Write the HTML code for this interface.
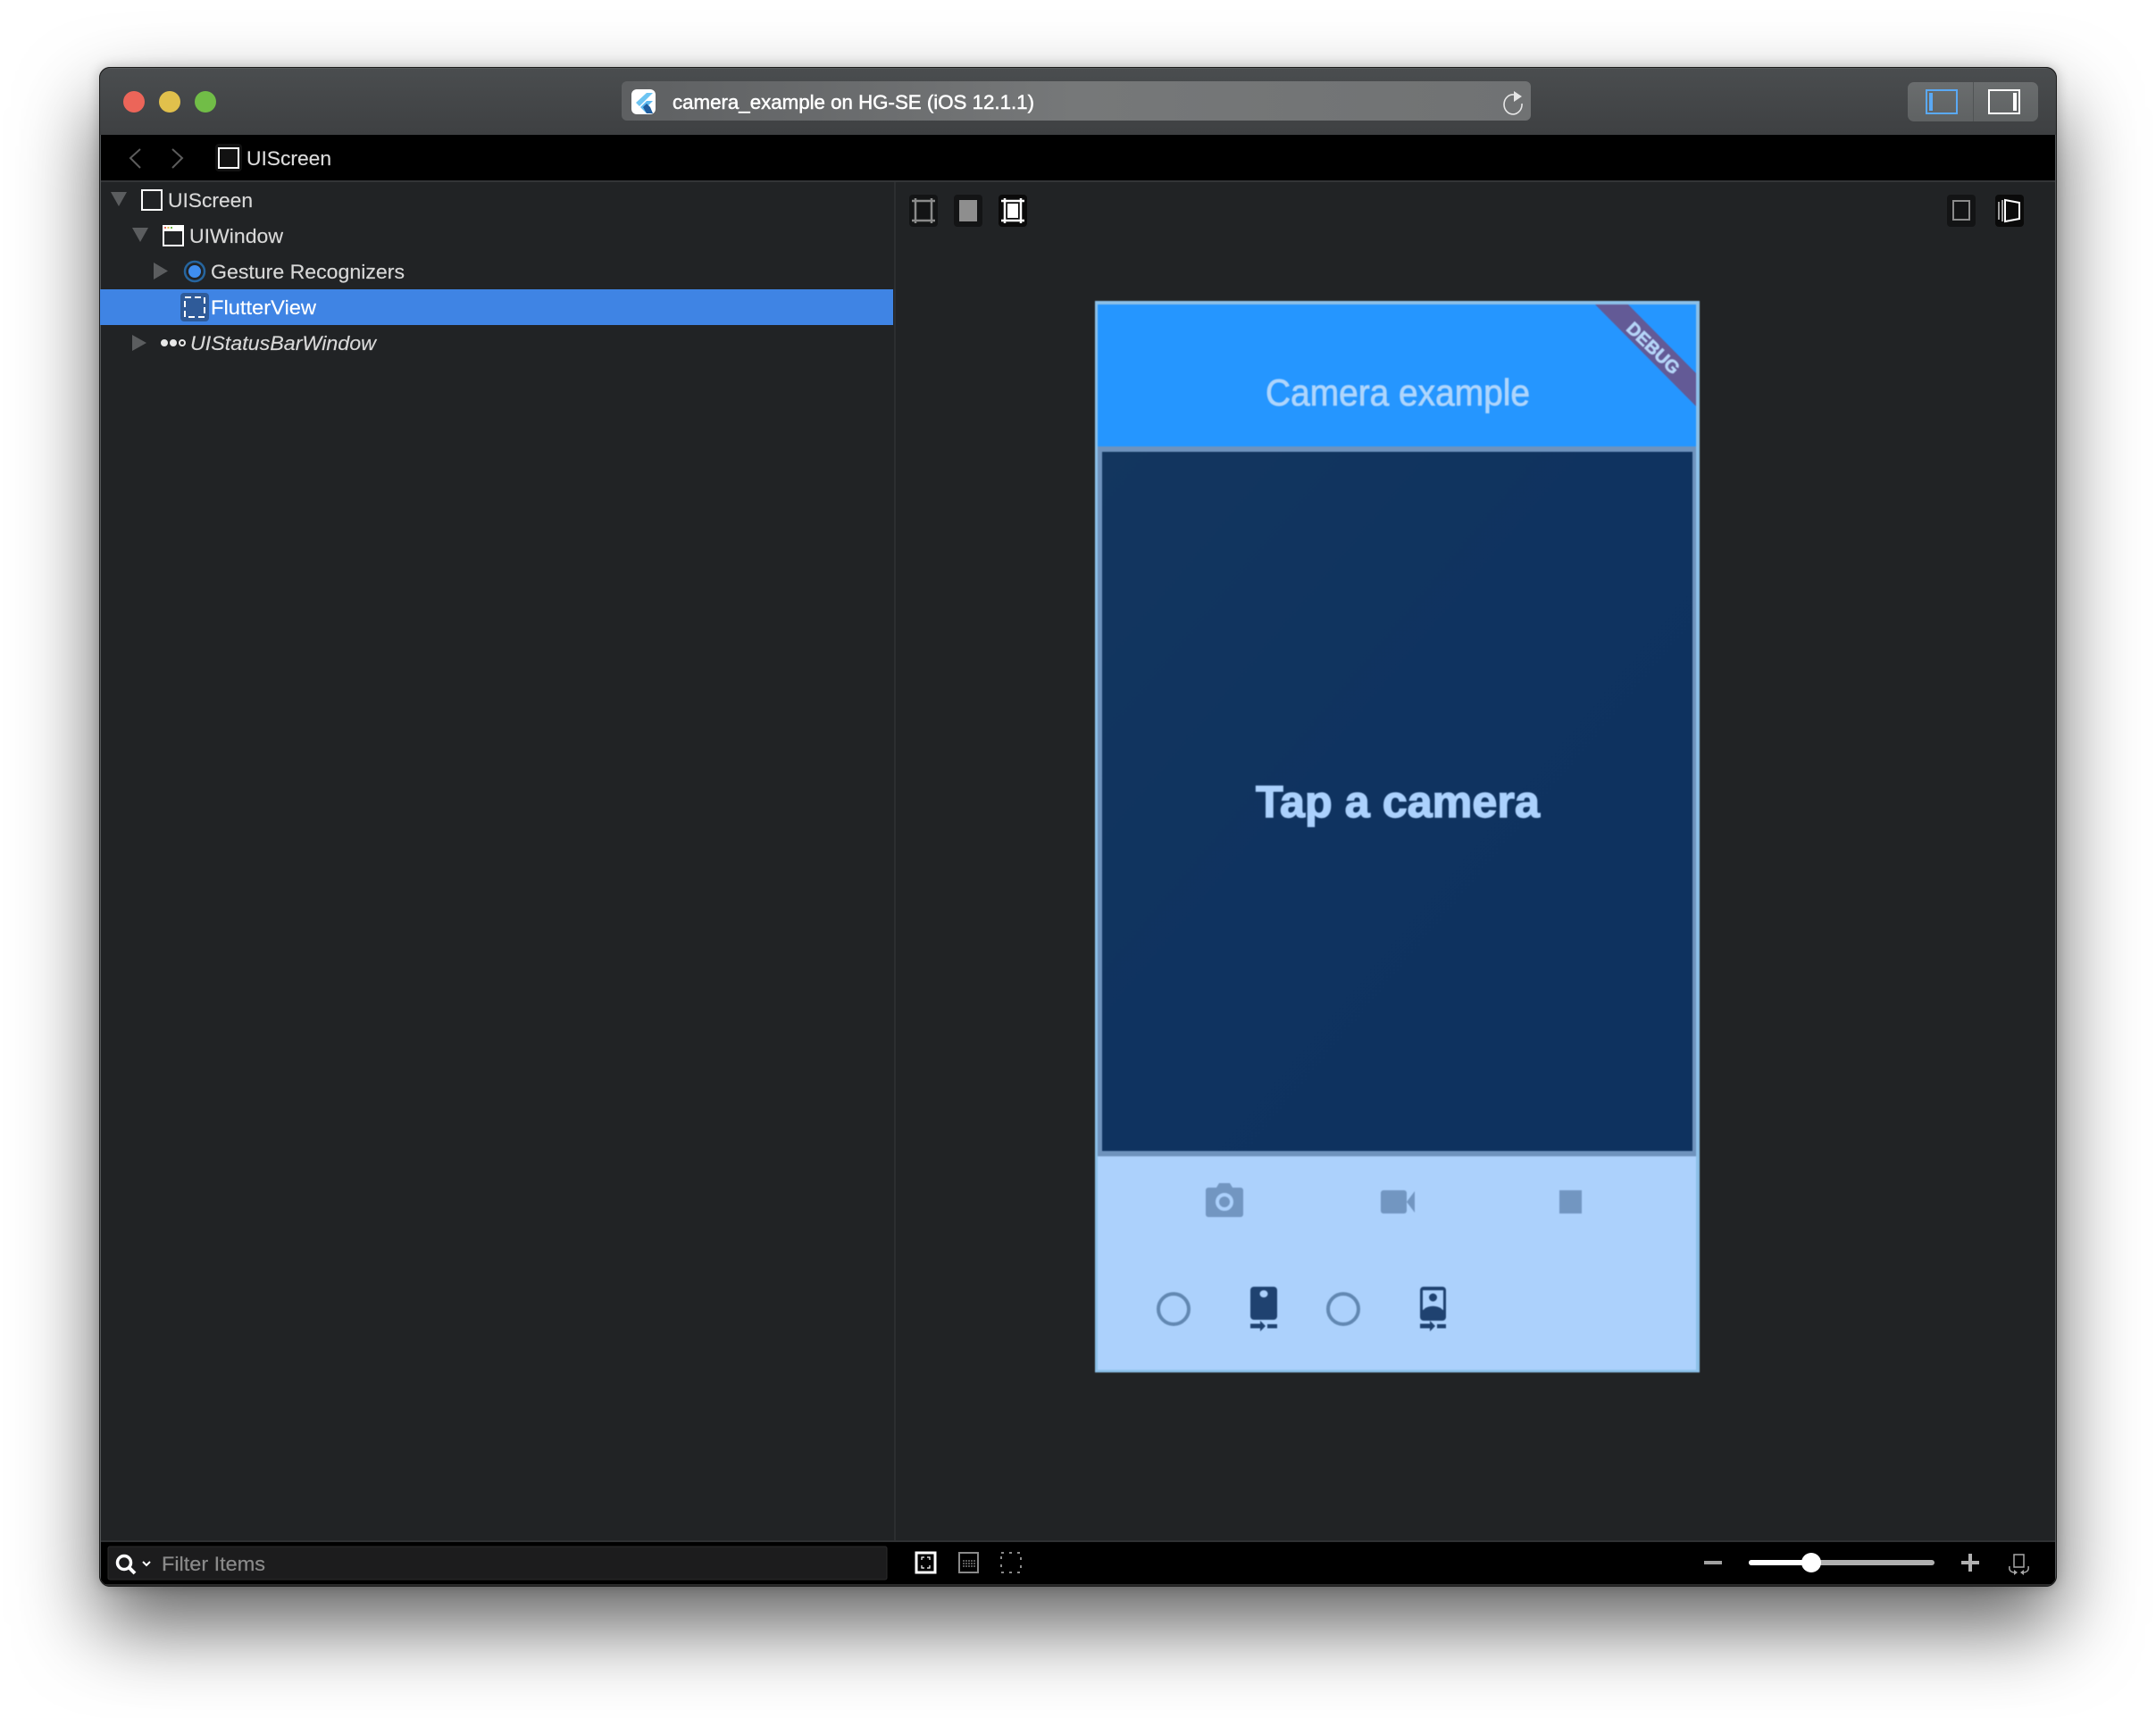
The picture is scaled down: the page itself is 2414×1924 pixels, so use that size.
<!DOCTYPE html>
<html lang="en">
<head>
<meta charset="utf-8">
<title>camera_example on HG-SE</title>
<style>
html,body{margin:0;padding:0;background:#fff;width:2414px;height:1924px;overflow:hidden}
#win{position:absolute;left:111px;top:75px;width:2192px;height:1702px;border-radius:12px;background:#212325;box-shadow:0 44px 90px rgba(0,0,0,.62),0 0 14px rgba(0,0,0,.22)}
svg{position:absolute;left:0;top:0}
text{font-family:"Liberation Sans",sans-serif}
.soft{filter:blur(.6px)}
</style>
</head>
<body>
<div id="win"></div>
<svg width="2414" height="1924" viewBox="0 0 2414 1924" xmlns="http://www.w3.org/2000/svg">
<defs>
<linearGradient id="tb" x1="0" y1="0" x2="0" y2="1"><stop offset="0" stop-color="#4a4d4f"/><stop offset="1" stop-color="#3e4042"/></linearGradient>
<linearGradient id="url" x1="0" y1="0" x2="1" y2="0"><stop offset="0" stop-color="#5e6062"/><stop offset=".5" stop-color="#767879"/><stop offset="1" stop-color="#707273"/></linearGradient>
<linearGradient id="tog" x1="0" y1="0" x2="0" y2="1"><stop offset="0" stop-color="#6a6d6e"/><stop offset="1" stop-color="#5f6263"/></linearGradient>
<linearGradient id="dk" x1="0" y1="0" x2="1" y2="1"><stop offset="0" stop-color="#13365f"/><stop offset=".5" stop-color="#0f3360"/><stop offset="1" stop-color="#0e325f"/></linearGradient>
<clipPath id="wc"><rect x="112" y="76" width="2190" height="1700" rx="12"/></clipPath>
<clipPath id="pc"><rect x="1230" y="341" width="669" height="200"/></clipPath>
</defs>

<rect x="111.500" y="75.500" width="2191" height="1701" rx="12" fill="#1c1c1c" stroke="#1c1c1c" stroke-width="1"/>
<rect x="112.500" y="76.500" width="2189" height="1699" rx="11" fill="none" stroke="#55585a" stroke-width="1"/>
<g clip-path="url(#wc)">
  <rect x="112" y="77" width="2190" height="74" fill="url(#tb)"/>
  <rect x="113" y="151" width="2188" height="52" fill="#000"/>
  <rect x="113" y="202" width="2188" height="2" fill="#333537"/>
  <rect x="113" y="204" width="2188" height="1521" fill="#212325"/>
  <rect x="1001" y="204" width="2" height="1521" fill="#2c2e30"/>
  <rect x="112" y="324" width="888" height="40" fill="#3f84e4"/>
  <rect x="113" y="1725" width="2188" height="2" fill="#2f3133"/>
  <rect x="113" y="1727" width="2188" height="47" fill="#000"/>
  <rect x="113" y="1774" width="2188" height="2" fill="#2a2a2a"/>
</g>

<!-- traffic lights -->
<circle cx="150" cy="114" r="12" fill="#ec6559"/>
<circle cx="190" cy="114" r="12" fill="#e1c04c"/>
<circle cx="230" cy="114" r="12" fill="#71bd47"/>

<!-- url field -->
<rect x="696" y="91" width="1018" height="44" rx="6" fill="url(#url)"/>
<rect x="707" y="100" width="27" height="28" rx="6" fill="#fff"/>
<path d="M724 104 L712 115 L716 119 L731 104Z" fill="#6cc4f2"/>
<path d="M724 113 L717 120 L724 127 L731 127 L724 120 L731 113Z" fill="#5cb8ee"/>
<path d="M720 120 L724 116 L728 120 L731 127 L724 127Z" fill="#1f5d9e"/>
<text x="753" y="122" font-size="22" fill="#fff" stroke="#fff" stroke-width=".5" textLength="405" lengthAdjust="spacingAndGlyphs">camera_example on HG-SE (iOS 12.1.1)</text>
<path d="M1695 106 A10 11 0 1 0 1704 116" fill="none" stroke="#e6e6e6" stroke-width="1.600"/>
<path d="M1695 102 L1704 108 L1695 114Z" fill="#e6e6e6"/>

<!-- panel toggles -->
<rect x="2136" y="92" width="146" height="44" rx="7" fill="url(#tog)"/>
<rect x="2209" y="92" width="1" height="44" fill="#515455"/>
<rect x="2157" y="101" width="34" height="26" fill="none" stroke="#5aa9f5" stroke-width="2"/>
<rect x="2160" y="104" width="4" height="20" fill="#5aa9f5"/>
<rect x="2227" y="101" width="34" height="26" fill="none" stroke="#fff" stroke-width="2"/>
<rect x="2254" y="104" width="4" height="20" fill="#fff"/>

<!-- breadcrumb -->
<path d="M157 167 L146 177 L157 188" fill="none" stroke="#5c5c5c" stroke-width="2"/>
<path d="M193 167 L204 177 L193 188" fill="none" stroke="#5c5c5c" stroke-width="2"/>
<rect x="241" y="161" width="30" height="31" rx="4" fill="#121212"/>
<rect x="245" y="166" width="22" height="22" fill="none" stroke="#fff" stroke-width="2"/>
<text x="276" y="185" font-size="22" fill="#dcdcdc" stroke="#dcdcdc" stroke-width=".15" textLength="95" lengthAdjust="spacingAndGlyphs">UIScreen</text>

<!-- tree -->
<path d="M124 215 H142 L133 231Z" fill="#5b5d5f"/>
<rect x="159" y="213" width="22" height="22" fill="none" stroke="#fff" stroke-width="2"/>
<text x="188" y="232" font-size="22" fill="#d8d8d8" stroke="#d8d8d8" stroke-width=".15" textLength="95" lengthAdjust="spacingAndGlyphs">UIScreen</text>

<path d="M148 255 H166 L157 271Z" fill="#5b5d5f"/>
<rect x="183" y="253" width="22" height="22" fill="none" stroke="#fff" stroke-width="2"/>
<rect x="182" y="252" width="24" height="7" fill="#fff"/>
<rect x="184" y="254" width="2" height="2" fill="#e26a5e"/><rect x="187.500" y="254" width="2" height="2" fill="#e0bf4e"/><rect x="191" y="254" width="2" height="2" fill="#71bd47"/>
<text x="212" y="272" font-size="22" fill="#d8d8d8" stroke="#d8d8d8" stroke-width=".15" textLength="105" lengthAdjust="spacingAndGlyphs">UIWindow</text>

<path d="M172 294 L188 303.500 L172 313Z" fill="#5b5d5f"/>
<circle cx="218" cy="304" r="11" fill="none" stroke="#26659f" stroke-width="2.500"/>
<circle cx="218" cy="304" r="7" fill="#3f8ef0"/>
<text x="236" y="312" font-size="22" fill="#d8d8d8" stroke="#d8d8d8" stroke-width=".15" textLength="217" lengthAdjust="spacingAndGlyphs">Gesture Recognizers</text>

<rect x="202" y="328" width="32" height="32" rx="4" fill="#2f5b99"/>
<rect x="207" y="333" width="22" height="22" fill="none" stroke="#fff" stroke-width="2" stroke-dasharray="7 4"/>
<text x="236" y="352" font-size="22" fill="#fff" stroke="#fff" stroke-width=".15" textLength="118" lengthAdjust="spacingAndGlyphs">FlutterView</text>

<path d="M148 375 L164 384 L148 393Z" fill="#5b5d5f"/>
<circle cx="184" cy="384" r="4" fill="#e8e8e8"/>
<circle cx="194" cy="384" r="4" fill="#e8e8e8"/>
<circle cx="204" cy="384" r="3" fill="none" stroke="#e8e8e8" stroke-width="2"/>
<text x="213" y="392" font-size="22" font-style="italic" fill="#d8d8d8" stroke="#d8d8d8" stroke-width=".15" textLength="208" lengthAdjust="spacingAndGlyphs">UIStatusBarWindow</text>

<!-- canvas toolbar top left -->
<rect x="1018" y="218" width="32" height="36" rx="4" fill="#131415"/>
<rect x="1068" y="218" width="32" height="36" rx="4" fill="#131415"/>
<rect x="1118" y="218" width="32" height="36" rx="4" fill="#0a0a0a"/>
<path d="M1025 222 V250 M1043 222 V250 M1021 225 H1047 M1021 247 H1047" stroke="#8a8a8a" stroke-width="2.500" fill="none"/>
<rect x="1074" y="224" width="20" height="24" fill="#8e8e8e"/>
<path d="M1125 222 V250 M1143 222 V250 M1121 225 H1147 M1121 247 H1147" stroke="#fff" stroke-width="2.500" fill="none"/>
<rect x="1128" y="228" width="12" height="16" fill="#fff"/>

<!-- top right -->
<rect x="2180" y="218" width="32" height="36" rx="4" fill="#131415"/>
<rect x="2234" y="218" width="32" height="36" rx="4" fill="#0a0a0a"/>
<rect x="2187" y="225" width="18" height="21" fill="none" stroke="#8a8a8a" stroke-width="2"/>
<path d="M2245 224 L2261 227 V245 L2245 248Z" fill="none" stroke="#fff" stroke-width="2"/>
<path d="M2238 226 V246 M2242 224 V248" stroke="#fff" stroke-width="1.200"/>

<!-- phone -->
<g class="soft">
<rect x="1226" y="337" width="677" height="1200" fill="#8cc0e8"/>
<rect x="1229" y="341" width="670" height="193" fill="#2596ff"/>
<rect x="1229" y="500" width="670" height="795" fill="#6f93bd"/>
<rect x="1234" y="506" width="661" height="783" fill="url(#dk)"/>
<rect x="1229" y="1295" width="670" height="239" fill="#acd1fc"/>
<g clip-path="url(#pc)">
  <path d="M1785 340 L1822 340 L1899 418 L1899 455Z" fill="#635a96"/>
</g>
<text x="0" y="0" transform="translate(1850 391) rotate(44)" font-size="20" font-weight="700" fill="#b5d5f8" stroke="#b5d5f8" stroke-width=".6" text-anchor="middle" dominant-baseline="middle" textLength="74" lengthAdjust="spacingAndGlyphs">DEBUG</text>
<text x="1417" y="454" font-size="42" fill="#aed5fc" stroke="#aed5fc" stroke-width=".8" textLength="296" lengthAdjust="spacingAndGlyphs">Camera example</text>
<text x="1406" y="915" font-size="50" font-weight="700" fill="#abd1fd" stroke="#abd1fd" stroke-width="1.400" textLength="318" lengthAdjust="spacingAndGlyphs">Tap a camera</text>

<!-- phone action icons -->
<path d="M1350 1333 a3 3 0 0 1 3 -3 H1362 L1365 1325 H1377 L1380 1330 H1389 a3 3 0 0 1 3 3 V1360 a3 3 0 0 1 -3 3 H1353 a3 3 0 0 1 -3 -3Z" fill="#7296c1"/>
<circle cx="1371" cy="1346" r="8" fill="none" stroke="#acd1fc" stroke-width="4"/>
<rect x="1546" y="1333" width="29" height="26" rx="3" fill="#7296c1"/>
<path d="M1575 1346 L1584 1334 V1358Z" fill="#7296c1"/>
<rect x="1746" y="1333" width="25" height="26" fill="#7296c1"/>

<circle cx="1314" cy="1466" r="17" fill="none" stroke="#6288b2" stroke-width="4"/>
<circle cx="1504" cy="1466" r="17" fill="none" stroke="#6288b2" stroke-width="4"/>

<rect x="1400" y="1441" width="30" height="37" rx="4" fill="#1f4270"/>
<ellipse cx="1415" cy="1449" rx="4.500" ry="4" fill="#acd1fc"/>
<path d="M1400 1482.500 H1411 V1479 L1417 1485 L1411 1491 V1487.500 H1400Z" fill="#1f4270"/>
<rect x="1419" y="1483" width="11" height="4.500" fill="#1f4270"/>

<rect x="1590" y="1441" width="29" height="38" rx="4" fill="#1f4270"/>
<rect x="1593" y="1445" width="23" height="22" fill="#acd1fc"/>
<circle cx="1604.500" cy="1453" r="4.500" fill="#1f4270"/>
<path d="M1593 1470 V1468 C1597 1461 1612 1461 1616 1468 V1470Z" fill="#1f4270"/>
<path d="M1590 1482.500 H1601 V1479 L1607 1485 L1601 1491 V1487.500 H1590Z" fill="#1f4270"/>
<rect x="1609" y="1483" width="10" height="4.500" fill="#1f4270"/>
</g>

<!-- bottom bar -->
<rect x="121" y="1732" width="872" height="37" rx="2" fill="#1c1c1d" stroke="#2b2b2c" stroke-width="1"/>
<circle cx="139" cy="1750" r="7.500" fill="none" stroke="#fff" stroke-width="3.500"/>
<path d="M144 1755 L151 1762" stroke="#fff" stroke-width="4"/>
<path d="M160 1749 L164 1753 L168 1749" fill="none" stroke="#fff" stroke-width="2"/>
<text x="181" y="1759" font-size="22" fill="#8a8a8a" stroke="#8a8a8a" stroke-width=".2" textLength="116" lengthAdjust="spacingAndGlyphs">Filter Items</text>

<rect x="1026" y="1739" width="21" height="22" fill="none" stroke="#fff" stroke-width="3"/>
<path d="M1035 1744 H1032 V1747 M1041 1747 V1744 H1038 M1032 1753 V1756 H1035 M1038 1756 H1041 V1753" fill="none" stroke="#fff" stroke-width="1.200"/>
<rect x="1074" y="1739" width="21" height="22" fill="none" stroke="#8a8a8a" stroke-width="2"/>
<path d="M1078 1748 H1092 M1078 1751 H1092 M1078 1754 H1092" stroke="#777" stroke-width="1.500" stroke-dasharray="2 1"/>
<rect x="1121" y="1739" width="22" height="22" fill="none" stroke="#8a8a8a" stroke-width="2" stroke-dasharray="3 6"/>

<rect x="1908" y="1748" width="20" height="4" fill="#a0a0a0"/>
<rect x="1958" y="1747" width="208" height="6" rx="3" fill="#b0b0b0"/>
<rect x="1958" y="1747" width="70" height="6" rx="3" fill="#fff"/>
<circle cx="2028" cy="1750" r="11" fill="#fff"/>
<rect x="2196" y="1748" width="20" height="4" fill="#b0b0b0"/>
<rect x="2204" y="1740" width="4" height="20" fill="#b0b0b0"/>
<rect x="2255" y="1741" width="11" height="14" fill="none" stroke="#a8a8a8" stroke-width="1.500"/>
<path d="M2250 1754 C2249 1759 2252 1761 2256 1761 M2271 1754 C2272 1759 2269 1761 2265 1761" fill="none" stroke="#a8a8a8" stroke-width="1.500"/>
<path d="M2255 1758 V1764 L2259 1761Z M2266 1758 V1764 L2262 1761Z" fill="#a8a8a8"/>
</svg>
</body>
</html>
